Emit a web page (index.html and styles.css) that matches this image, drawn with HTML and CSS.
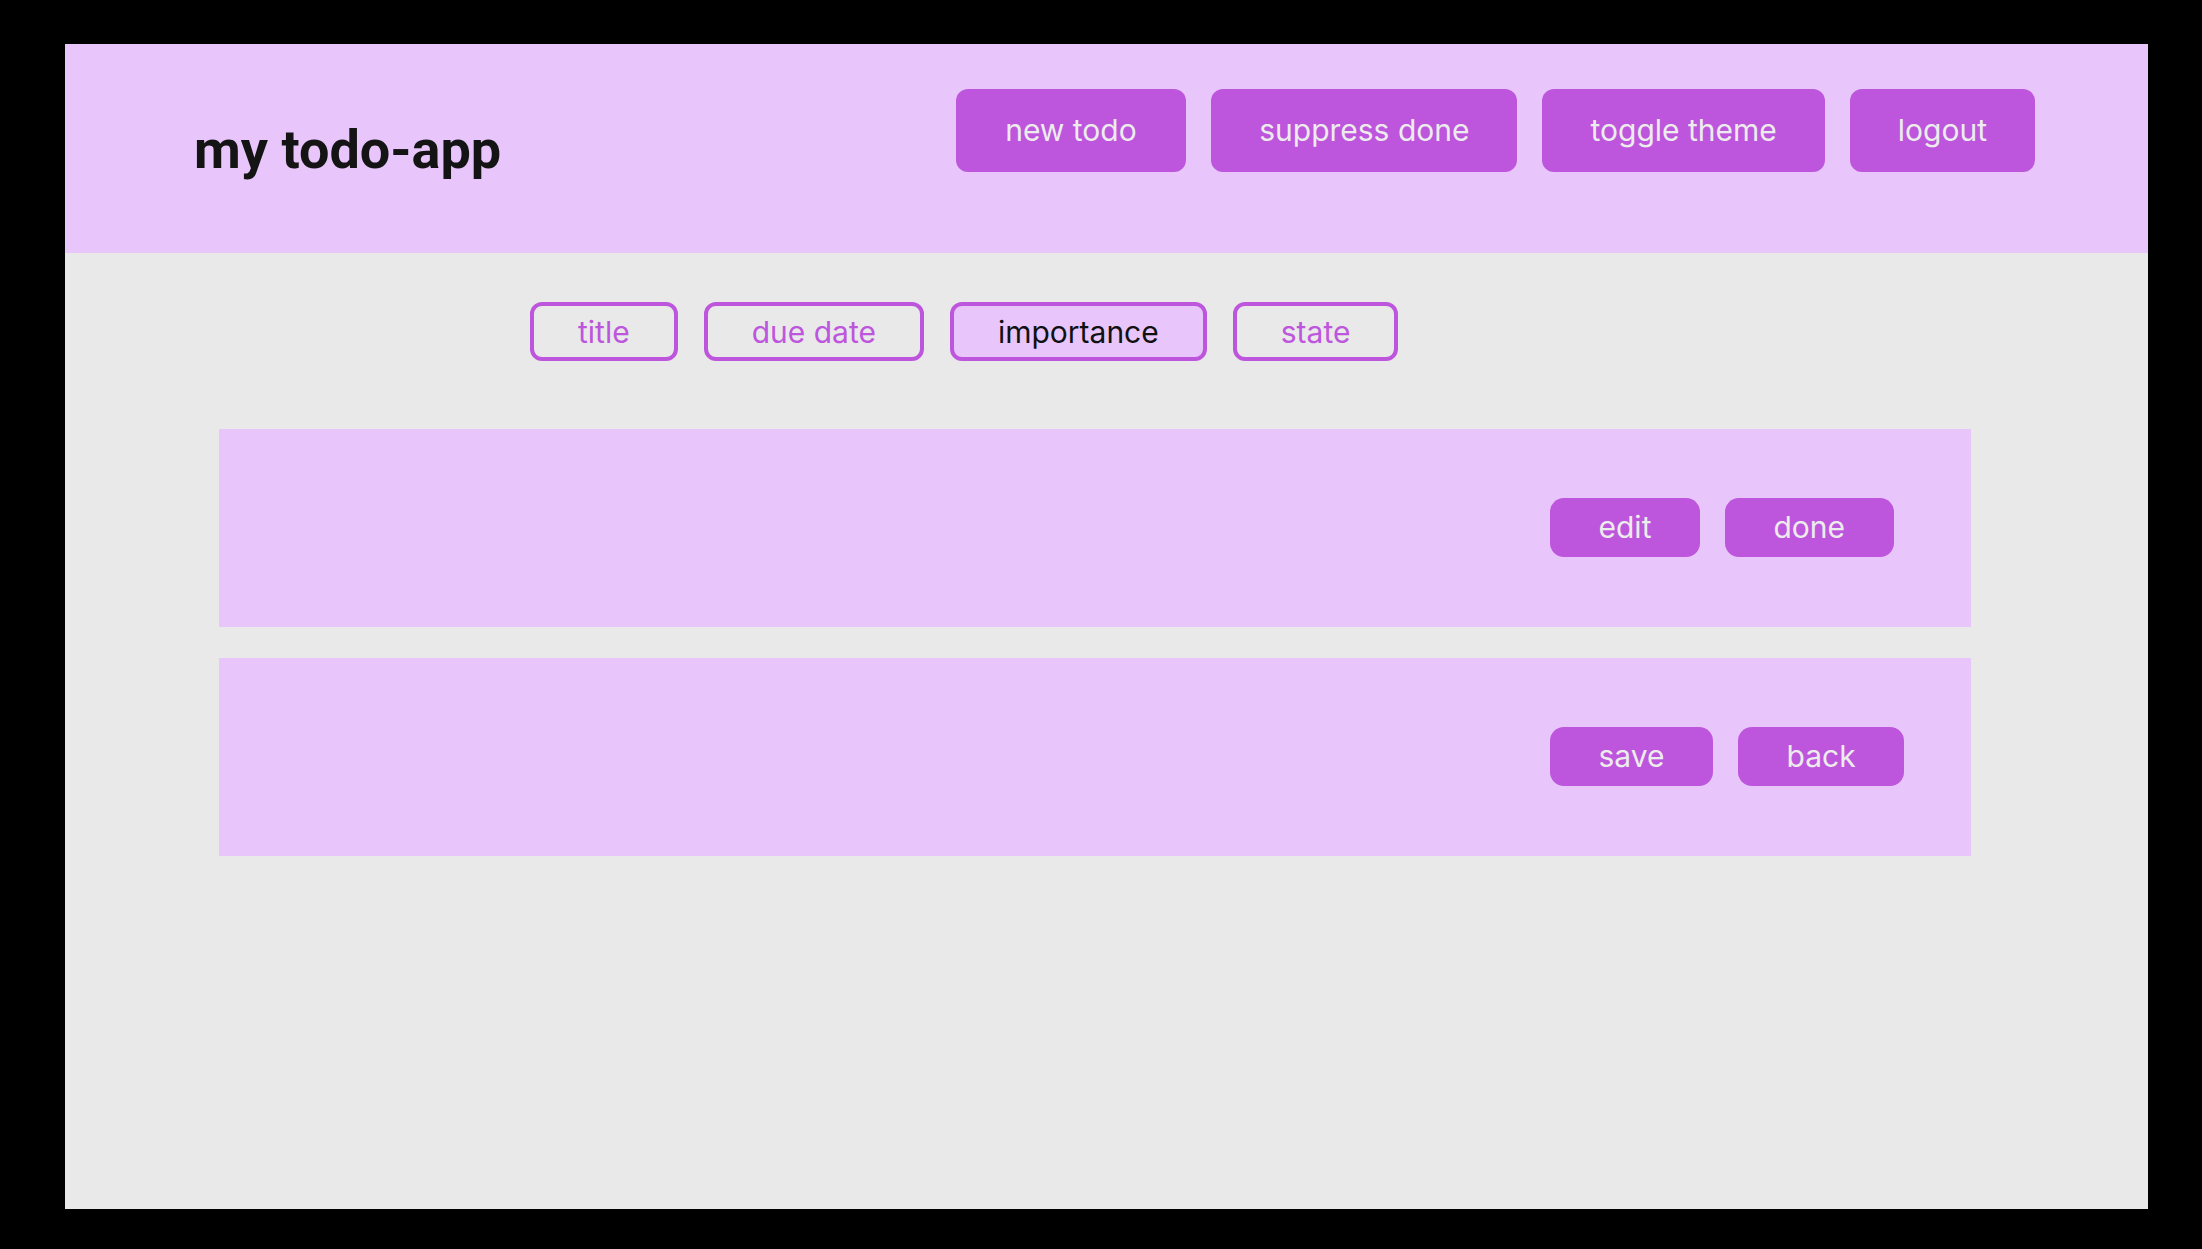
FILE: index.html
```html
<!DOCTYPE html>
<html lang="en">
<head>
<meta charset="utf-8">
<title>my todo-app</title>
<link rel="stylesheet" href="styles.css">
</head>
<body>
<div class="app">
  <header class="header">
    <h1 class="title">my todo-app</h1>
    <nav class="nav">
      <button class="btn btn-head">new todo</button>
      <button class="btn btn-head">suppress done</button>
      <button class="btn btn-head">toggle theme</button>
      <button class="btn btn-head">logout</button>
    </nav>
  </header>
  <main class="main">
    <div class="sortbar">
      <button class="sort">title</button>
      <button class="sort">due date</button>
      <button class="sort sort-active">importance</button>
      <button class="sort">state</button>
    </div>
    <ul class="list">
      <li class="card">
        <div class="card-body"></div>
        <div class="actions">
          <button class="btn btn-item">edit</button>
          <button class="btn btn-item">done</button>
        </div>
      </li>
      <li class="card">
        <div class="card-body"></div>
        <div class="actions">
          <button class="btn btn-item">save</button>
          <button class="btn btn-item">back</button>
        </div>
      </li>
    </ul>
  </main>
</div>
</body>
</html>
```

FILE: styles.css
```css
* { box-sizing: border-box; }

html, body { height: 100%; }

body {
  margin: 0;
  background: #000;
  padding: 44px 54px 40px 65px;
  font-family: "Inter", "Noto Sans", sans-serif;
}

.app {
  height: 100%;
  background: #e9e9e9;
  display: flex;
  flex-direction: column;
}

.header {
  height: 209px;
  background: #e8c6fc;
  display: flex;
  align-items: center;
  justify-content: space-between;
  padding: 0 113px 0 129px;
}

.title {
  margin: 2px 0 0;
  font-family: "Roboto", "Liberation Sans", sans-serif;
  font-weight: 700;
  font-size: 54px;
  color: #141414;
}

.nav {
  display: flex;
  gap: 25px;
  margin-bottom: 37px;
}

.btn {
  border: none;
  background: #bd55dd;
  color: #ececec;
  font-family: "Inter", "Noto Sans", sans-serif;
  font-size: 30px;
  line-height: 36px;
  font-weight: 400;
  cursor: pointer;
}

.btn-head {
  padding: 23.5px 48px;
  border-radius: 12px;
}

.btn-head:first-child {
  padding: 23.5px 49.5px;
}

.btn-item {
  padding: 11.5px 48.5px;
  border-radius: 14px;
}

.main {
  flex: 1;
  padding: 49px 177px 0 154px;
}

.sortbar {
  display: flex;
  gap: 26px;
  padding-left: 311px;
}

.sort {
  border: 4px solid #bd55dd;
  border-radius: 12px;
  background: transparent;
  color: #bd55dd;
  font-family: "Inter", "Noto Sans", sans-serif;
  font-size: 30px;
  line-height: 36px;
  padding: 7.5px 44px;
  cursor: pointer;
}

.sort-active {
  background: #e8c6fc;
  color: #111;
}

.list {
  list-style: none;
  margin: 68px 0 0;
  padding: 0;
  display: flex;
  flex-direction: column;
  gap: 31px;
}

.card {
  height: 198px;
  background: #e8c6fc;
  display: grid;
  grid-template-columns: 1fr 421px;
  align-items: center;
}

.actions {
  display: flex;
  gap: 25px;
  margin-bottom: 2px;
}
```
